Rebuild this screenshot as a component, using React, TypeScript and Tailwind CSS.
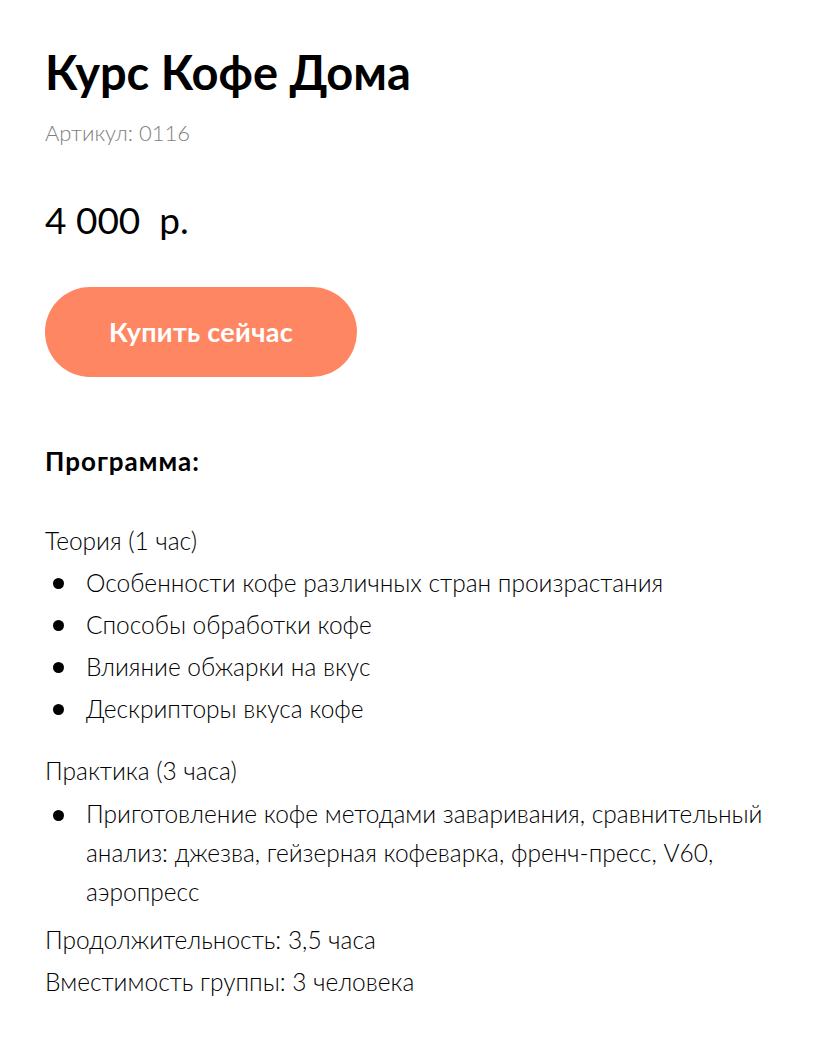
import React from "react";

const theory = [
  "Особенности кофе различных стран произрастания",
  "Способы обработки кофе",
  "Влияние обжарки на вкус",
  "Дескрипторы вкуса кофе",
];

const Bullet: React.FC<{ children: React.ReactNode }> = ({ children }) => (
  <li className="flex">
    <span className="w-[41px] shrink-0 pl-[8px] pt-[16px]">
      <span className="block w-[11px] h-[11px] rounded-full bg-black" />
    </span>
    <span className="max-w-[680px]">{children}</span>
  </li>
);

export default function App() {
  return (
    <div className="bg-white min-h-[1060px] px-[45px] pt-[40px] text-black font-['Lato',sans-serif]">
      <h1 className="text-[47px] font-bold leading-[64px]">Курс Кофе Дома</h1>
      <div className="mt-[14px] text-[22px] font-light text-[#808080] leading-[30px]">
        Артикул: 0116
      </div>
      <div className="mt-[48px] text-[37px] font-normal leading-[48px]">4 000&nbsp; р.</div>

      <button className="mt-[43px] w-[312px] h-[90px] rounded-full bg-[#ff8663] text-white text-[27px] font-bold tracking-[0.3px]">
        Купить сейчас
      </button>

      <div className="mt-[68px] text-[26px] font-bold tracking-[1px] leading-[32px]">
        Программа:
      </div>

      <div className="mt-[43px] text-[24.5px] font-light leading-[42px]">
        <div>Теория (1 час)</div>
        <ul>
          {theory.map((t) => (
            <Bullet key={t}>{t}</Bullet>
          ))}
        </ul>
        <div className="mt-[20px]">Практика (3 часа)</div>
        <ul className="leading-[39px] mt-[2px]">
          <Bullet>
            Приготовление кофе методами заваривания, сравнительный анализ: джезва, гейзерная
            кофеварка, френч-пресс, V60, аэропресс
          </Bullet>
        </ul>
        <div className="mt-[8px]">Продолжительность: 3,5 часа</div>
        <div>Вместимость группы: 3 человека</div>
      </div>
    </div>
  );
}
